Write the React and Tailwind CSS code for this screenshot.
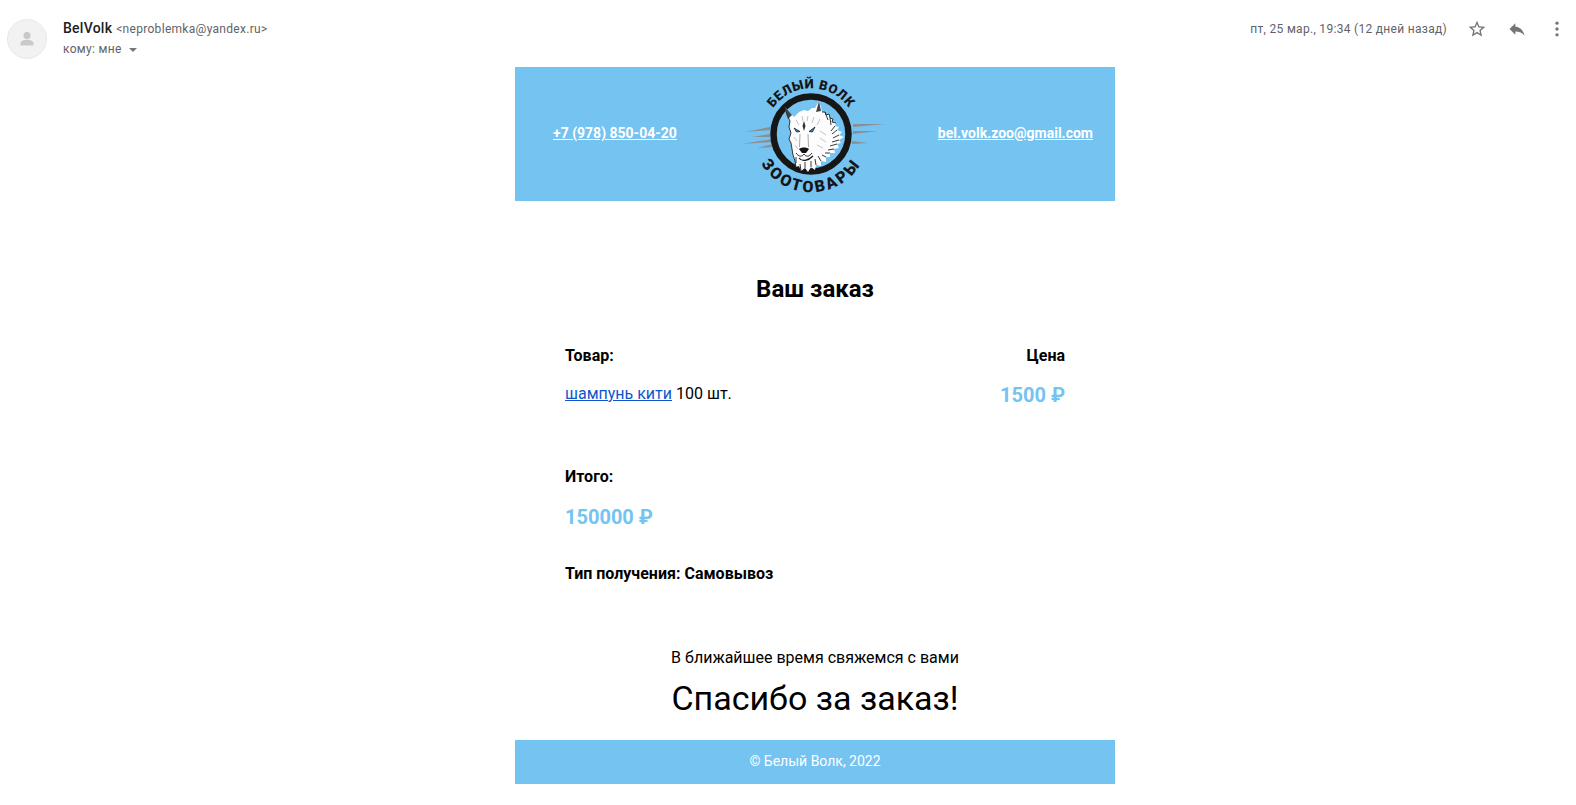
const BLUE = "#74c3f1";

function WolfLogo() {
  return (
    <svg width="180" height="134" viewBox="0 2 180 134" className="block ml-[5px]">
      <defs>
        <path id="arcTop" d="M45.2 65 A46 46 0 0 1 136.8 65" fill="none" />
        <path id="arcBottom" d="M33.2 74 A58 58 0 0 0 148.8 74" fill="none" />
      </defs>
      {/* claw marks */}
      <g fill="#8c8f92">
        <path d="M25 67 L50 62 L50 65 Z" />
        <path d="M32 72 L50 69 L50 72 Z" />
        <path d="M22 79 L52 74 L52 77 Z" />
        <path d="M37 83 L53 79 L53 82 Z" />
        <path d="M133 59 L165 59 L133 62 Z" />
        <path d="M133 66 L158 66 L133 69 Z" />
        <path d="M132 76 L148 78 L132 79 Z" />
      </g>
      <circle cx="91" cy="69" r="37.5" fill="none" stroke="#161616" strokeWidth="6.5" />
      {/* wolf head */}
      <path
        d="M65 42 L70 48 L74 52 L79 47 L84 45 L88 46 L92 43 L95 43 L99 36 L101 42 L102 47 L105 47 L106 50 L109 49 L110 53 L113 54 L112 57 L116 58 L115 61 L119 62 L117 65 L122 67 L119 70 L124 72 L119 75 L121 78 L117 79 L119 83 L114 84 L115 88 L110 88 L110 92 L106 92 L106 97 L101 96 L101 101 L96 100 L95 105 L91 102 L88 107 L85 103 L81 106 L79 101 L76 102 L75 96 L73 90 L72 84 L71 78 L69 74 L71 68 L69 62 L70 56 L67 50 Z"
        fill="#fdfdfd"
      />
      <path d="M65 42 L68 54 L72 50 Z" fill="#444" />
      <path d="M99 36 L96 47 L101 46 Z" fill="#444" />
      <g fill="none" stroke="#222" strokeWidth="0.9">
        <path d="M65 42 L67 50 L70 56 L69 62 L71 68 L69 74 L71 78 L72 84 L73 90 L75 96 L76 102" />
        <path d="M102 47 L105 47 L106 50 L109 49 L110 53 L113 54 L112 57 L116 58" />
        <path d="M105 47 L108 55 M110 53 L111 60 M115 61 L111 66 M117 65 L112 69 M119 70 L113 73" />
        <path d="M119 75 L112 77 M117 79 L110 81 M114 84 L108 85 M110 88 L105 88 M106 92 L102 90 M101 96 L98 91" />
        <path d="M96 100 L95 94 M91 102 L91 96 M85 103 L85 97 M81 106 L80 99 M76 98 L76 92" />
      </g>
      <g fill="none" stroke="#9a9a9a" strokeWidth="0.6">
        <path d="M76 55 L79 60 M82 51 L83 56 M88 51 L87 56 M94 52 L92 58 M100 54 L97 60" />
        <path d="M100 66 L106 70 M100 73 L106 77 M97 80 L103 83 M74 72 L77 76 M75 80 L78 84" />
      </g>
      {/* face */}
      <path d="M84 56 L82.5 61 L84 66 L85.5 61 Z" fill="#333" />
      <path d="M74 63 L80 66.5 L76.5 67 Z" fill="#2f86bd" stroke="#111" strokeWidth="0.7" />
      <path d="M95 62 L89 66.5 L92.5 67 Z" fill="#2f86bd" stroke="#111" strokeWidth="0.7" />
      <path d="M80 69 L79.5 82 M88 69 L88.5 82" fill="none" stroke="#8f8f8f" strokeWidth="0.8" />
      <path d="M79 84 C81 82 87 82 89 84 L86 88 L82 88 Z" fill="#151515" />
      <path d="M76 88 C79 92 82 92 84 89 C86 92 89 92 92 88" fill="none" stroke="#151515" strokeWidth="0.9" />
      <path d="M79 93 C82 97 88 96 93 91" fill="none" stroke="#151515" strokeWidth="1.2" />
      <text fontFamily="Roboto, sans-serif" fontWeight="900" fontSize="13" fill="#161616" letterSpacing="0.6">
        <textPath href="#arcTop" startOffset="50%" textAnchor="middle">БЕЛЫЙ ВОЛК</textPath>
      </text>
      <text fontFamily="Roboto, sans-serif" fontWeight="900" fontSize="16" fill="#161616" letterSpacing="2.5">
        <textPath href="#arcBottom" startOffset="50%" textAnchor="middle">ЗООТОВАРЫ</textPath>
      </text>
    </svg>
  );
}

function MailHeader() {
  return (
    <div className="flex justify-between h-[67px] pt-[19px] pl-[7px]">
      <div className="flex">
        <div className="w-10 h-10 rounded-full bg-[#f2f2f2] border border-[#e8e8e8] flex items-center justify-center">
          <svg width="20" height="20" viewBox="0 0 20 20" fill="#c9c9c9">
            <circle cx="10" cy="6.5" r="3.6" />
            <path d="M3.5 16.5 V14.5 C3.5 12 7 10.8 10 10.8 C13 10.8 16.5 12 16.5 14.5 V16.5 Z" />
          </svg>
        </div>
        <div className="ml-4 -mt-px">
          <div className="flex items-baseline h-5">
            <span className="text-sm font-medium text-[#202124] leading-5 tracking-[0.25px]">BelVolk</span>
            <span className="text-xs text-[#5f6368] ml-1 tracking-[0.3px]">&lt;neproblemka@yandex.ru&gt;</span>
          </div>
          <div className="flex items-center text-xs text-[#5f6368] h-[21px] pt-px tracking-[0.3px]">
            кому: мне
            <span className="ml-[7px] mt-[1px] w-0 h-0 border-x-[4px] border-x-transparent border-t-[4px] border-t-[#777]" />
          </div>
        </div>
      </div>
      <div className="flex items-start">
        <span className="text-xs text-[#5f6368] leading-5 tracking-[0.3px]">пт, 25 мар., 19:34 (12 дней назад)</span>
        <svg width="20" height="20" viewBox="0 0 24 24" className="ml-[20px]" fill="#757575">
          <path d="M22 9.24l-7.19-.62L12 2 9.19 8.63 2 9.24l5.46 4.73L5.82 21 12 17.27 18.18 21l-1.63-7.03L22 9.24zM12 15.4l-3.76 2.27 1-4.28-3.32-2.88 4.38-.38L12 6.1l1.71 4.04 4.38.38-3.32 2.88 1 4.28L12 15.4z" />
        </svg>
        <svg width="20" height="20" viewBox="0 0 24 24" className="ml-[20px]" fill="#757575">
          <path d="M10 9V5l-7 7 7 7v-4.1c5 0 8.5 1.6 11 5.1-1-5-4-10-11-11z" />
        </svg>
        <svg width="20" height="20" viewBox="0 0 24 24" className="ml-[20px] mr-[9px]" fill="#757575">
          <circle cx="12" cy="5" r="2" />
          <circle cx="12" cy="12" r="2" />
          <circle cx="12" cy="19" r="2" />
        </svg>
      </div>
    </div>
  );
}

export default function App() {
  return (
    <div className="bg-white min-h-[805px] font-['Roboto',sans-serif] text-black overflow-hidden">
      <MailHeader />
      <div className="w-[600px] ml-[515px]">
        <div className="h-[134px] bg-[#74c3f1] flex items-center justify-between pl-[38px] pr-[22px] text-white text-sm font-bold">
          <a href="#" className="underline mb-[2px]">+7 (978) 850-04-20</a>
          <WolfLogo />
          <a href="#" className="underline mb-[2px]">bel.volk.zoo@gmail.com</a>
        </div>

        <h1 className="mt-[74px] text-center font-bold leading-7 text-2xl">Ваш заказ</h1>

        <div className="mt-[43px] px-[50px]">
          <div className="flex justify-between text-base font-bold leading-5">
            <span>Товар:</span>
            <span>Цена</span>
          </div>
          <div className="flex justify-between mt-[18px]">
            <span className="text-base leading-5">
              <a href="#" className="text-[#1155cc] underline">шампунь кити</a> 100 шт.
            </span>
            <span className="text-xl font-bold leading-[22px]" style={{ color: BLUE }}>1500 ₽</span>
          </div>
          <div className="mt-[61px] text-base font-bold leading-5">Итого:</div>
          <div className="mt-[18px] text-xl font-bold leading-6" style={{ color: BLUE }}>150000 ₽</div>
          <div className="mt-[35px] text-base font-bold leading-5">Тип получения: Самовывоз</div>
        </div>

        <p className="mt-[64px] text-center text-base leading-5">В ближайшее время свяжемся с вами</p>
        <p className="mt-[10px] text-center text-[34px] leading-10">Спасибо за заказ!</p>

        <div className="mt-[22px] h-[44px] pb-[2px] bg-[#74c3f1] flex items-center justify-center text-white text-sm">
          © Белый Волк, 2022
        </div>
      </div>
    </div>
  );
}
